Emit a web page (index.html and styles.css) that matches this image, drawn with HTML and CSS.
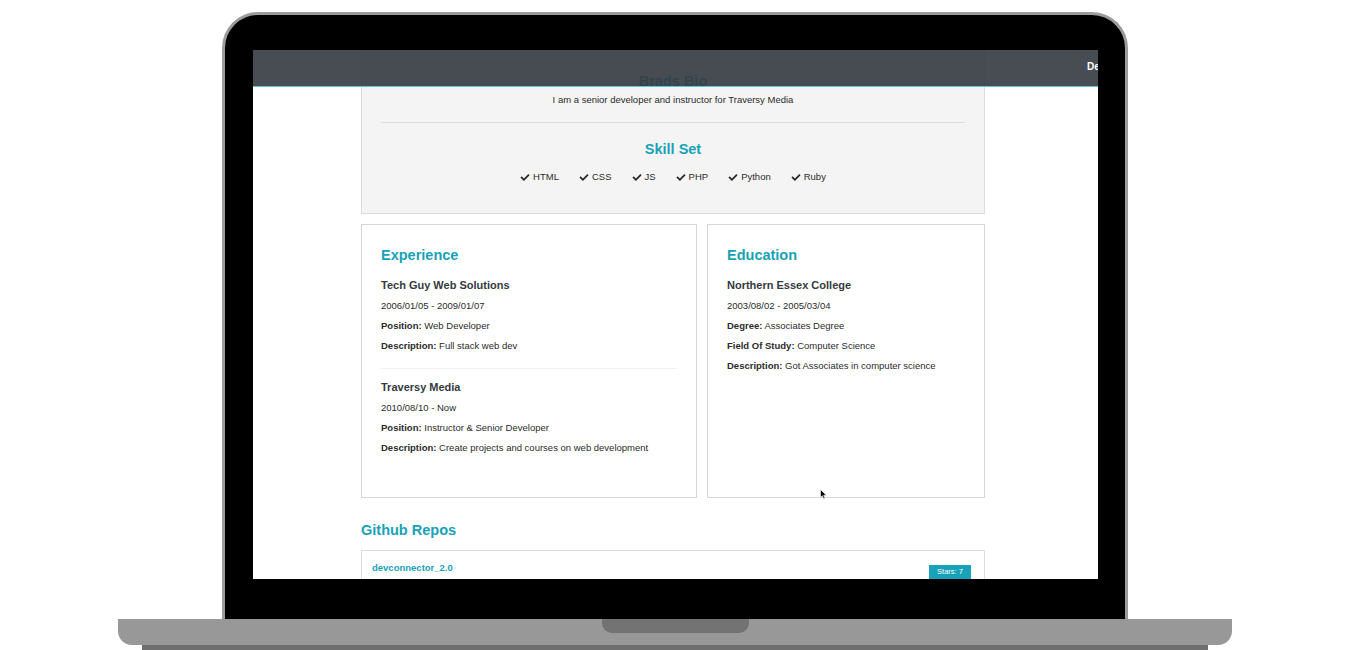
FILE: index.html
```html
<!DOCTYPE html>
<html lang="en">
<head>
<meta charset="utf-8">
<title>DevConnector Profile</title>
<link rel="stylesheet" href="styles.css">
</head>
<body>
<div class="stage">
  <div class="lid">
    <div class="screen">
      <div class="page">
        <div class="bio-card">
          <h2 class="teal-title">Brads Bio</h2>
          <p class="bio-text">I am a senior developer and instructor for Traversy Media</p>
          <div class="divider"></div>
          <h2 class="teal-title skill-title">Skill Set</h2>
          <ul class="skills">
            <li><svg class="check" viewBox="0 0 512 512"><path d="M173.9 439.4l-166.4-166.4c-10-10-10-26.2 0-36.2l36.2-36.2c10-10 26.2-10 36.2 0L192 312.7 432.1 72.6c10-10 26.2-10 36.2 0l36.2 36.2c10 10 10 26.2 0 36.2l-294.4 294.4c-10 10-26.2 10-36.2 0z"/></svg>HTML</li>
            <li><svg class="check" viewBox="0 0 512 512"><path d="M173.9 439.4l-166.4-166.4c-10-10-10-26.2 0-36.2l36.2-36.2c10-10 26.2-10 36.2 0L192 312.7 432.1 72.6c10-10 26.2-10 36.2 0l36.2 36.2c10 10 10 26.2 0 36.2l-294.4 294.4c-10 10-26.2 10-36.2 0z"/></svg>CSS</li>
            <li><svg class="check" viewBox="0 0 512 512"><path d="M173.9 439.4l-166.4-166.4c-10-10-10-26.2 0-36.2l36.2-36.2c10-10 26.2-10 36.2 0L192 312.7 432.1 72.6c10-10 26.2-10 36.2 0l36.2 36.2c10 10 10 26.2 0 36.2l-294.4 294.4c-10 10-26.2 10-36.2 0z"/></svg>JS</li>
            <li><svg class="check" viewBox="0 0 512 512"><path d="M173.9 439.4l-166.4-166.4c-10-10-10-26.2 0-36.2l36.2-36.2c10-10 26.2-10 36.2 0L192 312.7 432.1 72.6c10-10 26.2-10 36.2 0l36.2 36.2c10 10 10 26.2 0 36.2l-294.4 294.4c-10 10-26.2 10-36.2 0z"/></svg>PHP</li>
            <li><svg class="check" viewBox="0 0 512 512"><path d="M173.9 439.4l-166.4-166.4c-10-10-10-26.2 0-36.2l36.2-36.2c10-10 26.2-10 36.2 0L192 312.7 432.1 72.6c10-10 26.2-10 36.2 0l36.2 36.2c10 10 10 26.2 0 36.2l-294.4 294.4c-10 10-26.2 10-36.2 0z"/></svg>Python</li>
            <li><svg class="check" viewBox="0 0 512 512"><path d="M173.9 439.4l-166.4-166.4c-10-10-10-26.2 0-36.2l36.2-36.2c10-10 26.2-10 36.2 0L192 312.7 432.1 72.6c10-10 26.2-10 36.2 0l36.2 36.2c10 10 10 26.2 0 36.2l-294.4 294.4c-10 10-26.2 10-36.2 0z"/></svg>Ruby</li>
          </ul>
        </div>

        <div class="cols">
          <div class="card">
            <h2 class="teal-title card-title">Experience</h2>
            <div class="item">
              <h4>Tech Guy Web Solutions</h4>
              <p>2006/01/05 - 2009/01/07</p>
              <p><strong>Position:</strong> Web Developer</p>
              <p><strong>Description:</strong> Full stack web dev</p>
            </div>
            <div class="item">
              <h4>Traversy Media</h4>
              <p>2010/08/10 - Now</p>
              <p><strong>Position:</strong> Instructor &amp; Senior Developer</p>
              <p><strong>Description:</strong> Create projects and courses on web development</p>
            </div>
          </div>
          <div class="card">
            <h2 class="teal-title card-title">Education</h2>
            <div class="item">
              <h4>Northern Essex College</h4>
              <p>2003/08/02 - 2005/03/04</p>
              <p><strong>Degree:</strong> Associates Degree</p>
              <p><strong>Field Of Study:</strong> Computer Science</p>
              <p><strong>Description:</strong> Got Associates in computer science</p>
            </div>
          </div>
        </div>

        <h2 class="teal-title repos-title">Github Repos</h2>
        <div class="repo">
          <div class="repo-info">
            <a class="repo-name" href="#">devconnector_2.0</a>
          </div>
          <div class="badges">
            <span class="badge">Stars: 7</span>
          </div>
        </div>
      </div>

      <nav class="navbar">
        <ul class="nav-links">
          <li>Developers</li>
        </ul>
      </nav>

      <svg class="cursor" viewBox="0 0 7 11"><path d="M0.5 0.5 L0.5 8.5 L2.4 6.7 L3.7 9.8 L5 9.2 L3.7 6.2 L6.3 6.2 Z" fill="#000" stroke="#fff" stroke-width="0.6"/></svg>
    </div>
  </div>
  <div class="base"><div class="notch"></div></div>
  <div class="base-shadow"></div>
</div>
</body>
</html>
```

FILE: styles.css
```css
* { box-sizing: border-box; }

body {
  margin: 0;
  background: #fff;
  font-family: "Liberation Sans", Arial, Helvetica, sans-serif;
  color: #2b2b2b;
}

.stage {
  width: 1350px;
  height: 650px;
  overflow: hidden;
  padding-top: 12px;
}

/* laptop */
.lid {
  margin-left: 222px;
  width: 906px;
  height: 607px;
  background: #000;
  border: 3px solid #9c9c9c;
  border-bottom: 0;
  border-radius: 36px 36px 0 0;
  padding: 35px 27px 0 28px;
}

.screen {
  position: relative;
  width: 845px;
  height: 529px;
  background: #fff;
  overflow: hidden;
}

.base {
  margin-left: 118px;
  width: 1114px;
  height: 26px;
  background: #989898;
  border-radius: 0 0 14px 14px;
  display: flex;
  justify-content: center;
}

.notch {
  width: 147px;
  height: 14px;
  background: #737373;
  border-radius: 0 0 10px 10px;
}

.base-shadow {
  margin-left: 142px;
  width: 1066px;
  height: 6px;
  background: #6f6f6f;
}

/* navbar overlay */
.navbar {
  position: absolute;
  top: 0;
  left: 0;
  right: 0;
  height: 37px;
  background: rgba(52, 58, 64, 0.9);
  border-bottom: 1px solid #5cc6d6;
  display: flex;
  align-items: center;
  padding-left: 834px;
  white-space: nowrap;
}

.nav-links {
  list-style: none;
  margin: -2px 0 0;
  padding: 0;
  display: flex;
  color: #fff;
  font-weight: bold;
  font-size: 10px;
  line-height: 14px;
}

/* page content */
.page {
  width: 624px;
  margin-left: 108px;
  font-size: 9.5px;
  line-height: 14px;
}

.teal-title {
  color: #17a2b8;
  font-weight: bold;
  font-size: 14.5px;
  line-height: 18px;
  margin: 0;
}

.bio-card {
  background: #f4f4f4;
  border: 1px solid #dcdcdc;
  padding: 21px 19px 29px;
  text-align: center;
}

.bio-text {
  margin: 3px 0 0;
}

.divider {
  height: 1px;
  background: #dcdcdc;
  margin-top: 15px;
}

.skill-title {
  margin-top: 17px;
}

.skills {
  list-style: none;
  margin: 12px 0 0;
  padding: 0;
  display: flex;
  justify-content: center;
}

.skills li {
  display: flex;
  align-items: center;
  padding: 0 10px;
}

.check {
  width: 10px;
  height: 9px;
  fill: #2b2b2b;
  margin-right: 3px;
}

.cols {
  display: grid;
  grid-template-columns: 336px 1fr;
  gap: 10px;
  margin-top: 10px;
}

.card {
  border: 1px solid #d6d6d6;
  background: #fff;
  padding: 21px 19px 42px;
}

.card-title {
  margin-bottom: 14px;
}

.item h4 {
  margin: 0 0 7px;
  font-size: 11px;
  line-height: 14px;
  color: #343a40;
  font-weight: bold;
}

.item p {
  margin: 0;
}

.item p + p {
  margin-top: 6px;
}

.item + .item {
  margin-top: 11px;
}

.item:not(:last-child) {
  padding-bottom: 15px;
  border-bottom: 1px solid #f0f0f0;
}

.repos-title {
  margin-top: 23px;
  margin-bottom: 11px;
}

.repo {
  border: 1px solid #dcdcdc;
  padding: 10px 13px 9px 10px;
  display: flex;
  justify-content: space-between;
  background: #fff;
}

.repo-name {
  color: #17a2b8;
  font-weight: bold;
  text-decoration: none;
  font-size: 9.5px;
  line-height: 14px;
}

.badges {
  padding-top: 4px;
  display: flex;
  flex-direction: column;
}

.badge {
  display: block;
  background: #17a2b8;
  color: #fff;
  font-size: 7.5px;
  line-height: 14px;
  height: 14px;
  width: 42px;
  text-align: center;
}

.cursor {
  position: absolute;
  left: 567px;
  top: 439px;
  width: 7px;
  height: 11px;
}
```
